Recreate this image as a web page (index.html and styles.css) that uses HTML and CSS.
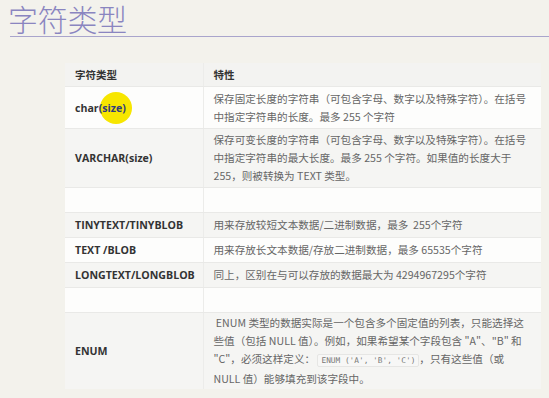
FILE: index.html
```html
<!DOCTYPE html>
<html lang="zh">
<head>
<meta charset="utf-8">
<link rel="stylesheet" href="styles.css">
</head>
<body>
<div class="page">
  <h1 class="title">字符类型</h1>
  <div class="rule"></div>
  <table class="types">
    <colgroup><col class="c1"><col class="c2"></colgroup>
    <tr class="head"><th>字符类型</th><th>特性</th></tr>
    <tr class="r-char white">
      <td class="name"><span class="hl"></span><span class="lbl">char<span class="sz">(size)</span></span></td>
      <td class="desc">保存固定长度的字符串（可包含字母、数字以及特殊字符）。在括号<br>中指定字符串的长度。最多 255 个字符</td>
    </tr>
    <tr class="r-var gray">
      <td class="name">VARCHAR(size)</td>
      <td class="desc">保存可变长度的字符串（可包含字母、数字以及特殊字符）。在括号<br>中指定字符串的最大长度。最多 255 个字符。如果值的长度大于<br>255，则被转换为 TEXT 类型。</td>
    </tr>
    <tr class="r-one white"><td></td><td></td></tr>
    <tr class="r-one gray">
      <td class="name">TINYTEXT/TINYBLOB</td>
      <td class="desc">用来存放较短文本数据/二进制数据，最多&nbsp; 255个字符</td>
    </tr>
    <tr class="r-one white">
      <td class="name">TEXT /BLOB</td>
      <td class="desc">用来存放长文本数据/存放二进制数据，最多 65535个字符</td>
    </tr>
    <tr class="r-one gray">
      <td class="name">LONGTEXT/LONGBLOB</td>
      <td class="desc">同上，区别在与可以存放的数据最大为 4294967295个字符</td>
    </tr>
    <tr class="r-one white"><td></td><td></td></tr>
    <tr class="r-enum gray">
      <td class="name">ENUM</td>
      <td class="desc">&nbsp;ENUM 类型的数据实际是一个包含多个固定值的列表，只能选择这<br>些值（包括 NULL 值）。例如，如果希望某个字段包含 "A"、"B" 和<br>"C"，必须这样定义： <code>ENUM ('A', 'B', 'C')</code>，只有这些值（或<br>NULL 值）能够填充到该字段中。</td>
    </tr>
  </table>
</div>
</body>
</html>
```
FILE: styles.css
```css
html, body {
  margin: 0;
  padding: 0;
}
body {
  background: #f3f2ec;
  width: 549px;
  height: 398px;
  overflow: hidden;
}
.title {
  margin: 0;
  padding-left: 8px;
  height: 36px;
  font-family: "Noto Sans CJK SC", sans-serif;
  font-weight: 300;
  font-size: 30px;
  line-height: 36px;
  color: #8a85c0;
  letter-spacing: -0.3px;
}
.rule {
  margin-left: 10px;
  border-top: 1px solid #a9a5cc;
  height: 0;
}
.types {
  margin-top: 26px;
  margin-left: 65px;
  width: 476px;
  border-collapse: collapse;
  table-layout: fixed;
  font-family: "Open Sans", "Noto Sans CJK SC", sans-serif;
}
.c1 { width: 138px; }
.c2 { width: 338px; }
.types th, .types td {
  padding: 0 0 0 10px;
  text-align: left;
  vertical-align: middle;
  border-bottom: 1px solid #e9e9e7;
  border-right: 1px solid #ececea;
}
.types th:last-child, .types td:last-child {
  border-right: none;
}
.head th {
  height: 23px;
  background: #f3f3f1;
  font-family: "Noto Sans CJK SC", sans-serif;
  font-weight: bold;
  font-size: 10.5px;
  color: #333;
}
.white td { background: #fdfdfc; }
.gray td { background: #f5f5f3; }
.r-char td { height: 41px; }
.r-var td { height: 58px; }
.r-one td { height: 24px; }
.r-enum td { height: 76px; border-bottom: none; }
.name {
  font-family: "Open Sans", "Noto Sans CJK SC", sans-serif;
  font-weight: bold;
  font-size: 10.6px;
  color: #333;
  position: relative;
}
.desc {
  font-family: "Noto Sans CJK SC", sans-serif;
  font-size: 10.6px;
  line-height: 18px;
  color: #666;
  white-space: nowrap;
}
.hl {
  position: absolute;
  left: 35px;
  top: 5px;
  width: 32px;
  height: 32px;
  border-radius: 50%;
  background: #f7e600;
}
.lbl {
  position: relative;
}
.sz {
  color: #2f3b7e;
}
code {
  font-family: "DejaVu Sans Mono", monospace;
  font-size: 7.8px;
  color: #777;
  background: #f7f7f6;
  border: 1px solid #e6e6e4;
  border-radius: 2px;
  padding: 1px 3px;
}
```
